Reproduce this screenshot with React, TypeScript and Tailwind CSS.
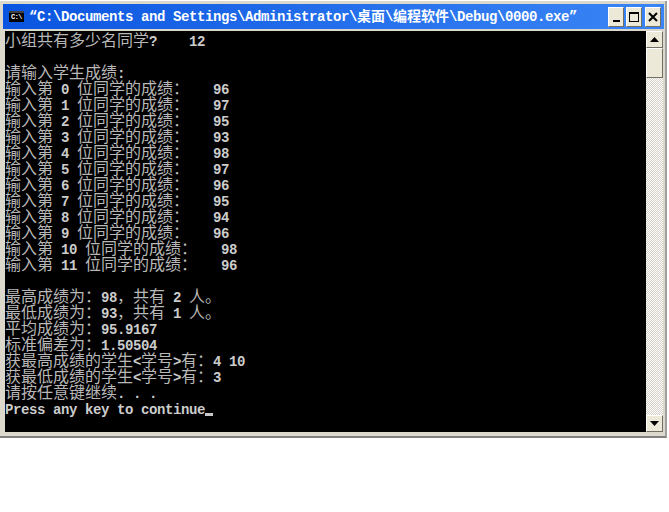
const LINES = [
  "小组共有多少名同学?    12",
  "",
  "请输入学生成绩:",
  "输入第 0 位同学的成绩：   96",
  "输入第 1 位同学的成绩：   97",
  "输入第 2 位同学的成绩：   95",
  "输入第 3 位同学的成绩：   93",
  "输入第 4 位同学的成绩：   98",
  "输入第 5 位同学的成绩：   97",
  "输入第 6 位同学的成绩：   96",
  "输入第 7 位同学的成绩：   95",
  "输入第 8 位同学的成绩：   94",
  "输入第 9 位同学的成绩：   96",
  "输入第 10 位同学的成绩：   98",
  "输入第 11 位同学的成绩：   96",
  "",
  "最高成绩为：98，共有 2 人。",
  "最低成绩为：93，共有 1 人。",
  "平均成绩为：95.9167",
  "标准偏差为：1.50504",
  "获最高成绩的学生<学号>有：4 10",
  "获最低成绩的学生<学号>有：3",
  "请按任意键继续. . .",
];

const RUNS = /[\u3000-\u9fff\uff00-\uffef]+|[^\u3000-\u9fff\uff00-\uffef]+/g;

// latin is 8px a cell, CJK is two cells
function ConsoleLine({ text }: { text: string }) {
  const runs = text.match(RUNS) ?? [];
  return (
    <div className="h-[16px] flex items-start">
      {runs.map((run, i) =>
        /^[\u3000-\u9fff\uff00-\uffef]/.test(run) ? (
          <span key={i} className="h-[16px] -mt-[3px] font-['Noto_Sans_CJK_SC',sans-serif] text-[16px] tracking-normal leading-[16px] font-normal text-[#b8b8b8]">
            {run}
          </span>
        ) : (
          <span key={i} className="h-[16px]">{run}</span>
        )
      )}
    </div>
  );
}

function CaptionButton({ children }: { children: React.ReactNode }) {
  return (
    <div className="w-[16px] h-[20px] flex items-center justify-center bg-[#ece9d8] border border-t-white border-l-white border-r-[#716f64] border-b-[#716f64]">
      {children}
    </div>
  );
}

function ScrollButton({ up }: { up?: boolean }) {
  return (
    <div className="w-[17px] h-[17px] shrink-0 flex items-center justify-center bg-[#ece9d8] border border-t-white border-l-white border-r-[#716f64] border-b-[#716f64]">
      <svg width="9" height="5" viewBox="0 0 9 5">
        <path d={up ? "M4.5 0 L9 5 L0 5 Z" : "M0 0 L9 0 L4.5 5 Z"} fill="#000" />
      </svg>
    </div>
  );
}

export default function App() {
  return (
    <div className="w-[669px] h-[512px] bg-white overflow-hidden">
      <div className="w-[667px] h-[437px] mt-[1px] flex flex-col bg-[#dcd9cc] border-b-2 border-b-[#808080] border-r-2 border-r-[#a0a0a0] pt-[3px] pl-[3px]">
        {/* Title bar */}
        <div className="h-[25px] shrink-0 flex items-center bg-gradient-to-r from-[#0a55e0] to-[#3a85f5] mr-[1px] pl-[6px] pr-[3px] font-['Liberation_Mono',monospace] text-[14px] tracking-[-0.4px] font-bold text-white">
          <div className="w-[15px] h-[11px] bg-[#d4d0c8] border-t-2 border-t-[#404040] mr-[5px] shrink-0 flex items-center justify-center">
            <span className="bg-black text-white text-[7px] leading-[9px] w-full text-center tracking-[-0.5px]">C:\</span>
          </div>
          <span className="whitespace-pre pt-[2px]">
            “C:\Documents and Settings\Administrator\
            <span className="font-['Noto_Sans_CJK_SC',sans-serif] text-[14px] tracking-normal leading-none font-bold">桌面</span>
            \
            <span className="font-['Noto_Sans_CJK_SC',sans-serif] text-[14px] tracking-normal leading-none font-bold">编程软件</span>
            \Debug\0000.exe”
          </span>
          <div className="ml-auto flex items-center">
            <div className="mr-[2px]">
              <CaptionButton>
                <div className="w-[7px] h-[2px] bg-black mt-[9px]" />
              </CaptionButton>
            </div>
            <div className="mr-[3px]">
              <CaptionButton>
                <div className="w-[10px] h-[10px] border border-black border-t-2" />
              </CaptionButton>
            </div>
            <CaptionButton>
              <svg width="10" height="10" viewBox="0 0 10 10">
                <path d="M1 1 L9 9 M9 1 L1 9" stroke="#000" strokeWidth="2" />
              </svg>
            </CaptionButton>
          </div>
        </div>

        {/* Client area */}
        <div className="flex mt-[2px] ml-[2px] h-[401px]">
          <div className="w-[641px] bg-black text-[#cccccc] font-['Liberation_Mono',monospace] font-bold text-[14px] tracking-[-0.4px] leading-[16px] whitespace-pre pt-[3px]">
            {LINES.map((line, i) => (
              <ConsoleLine key={i} text={line} />
            ))}
            <div className="h-[16px] flex">
              <span>Press any key to continue</span>
              <span className="w-[8px] h-[3px] bg-[#c8c8c8] mt-[11px]" />
            </div>
          </div>
          <div className="w-[17px] flex flex-col bg-[repeating-conic-gradient(#ffffff_0_25%,#d4d0c8_0_50%)] bg-[length:2px_2px]">
            <ScrollButton up />
            <div className="h-[30px] bg-[#ece9d8] border border-t-white border-l-white border-r-[#716f64] border-b-[#716f64]" />
            <div className="flex-1" />
            <ScrollButton />
          </div>
        </div>
      </div>
    </div>
  );
}
